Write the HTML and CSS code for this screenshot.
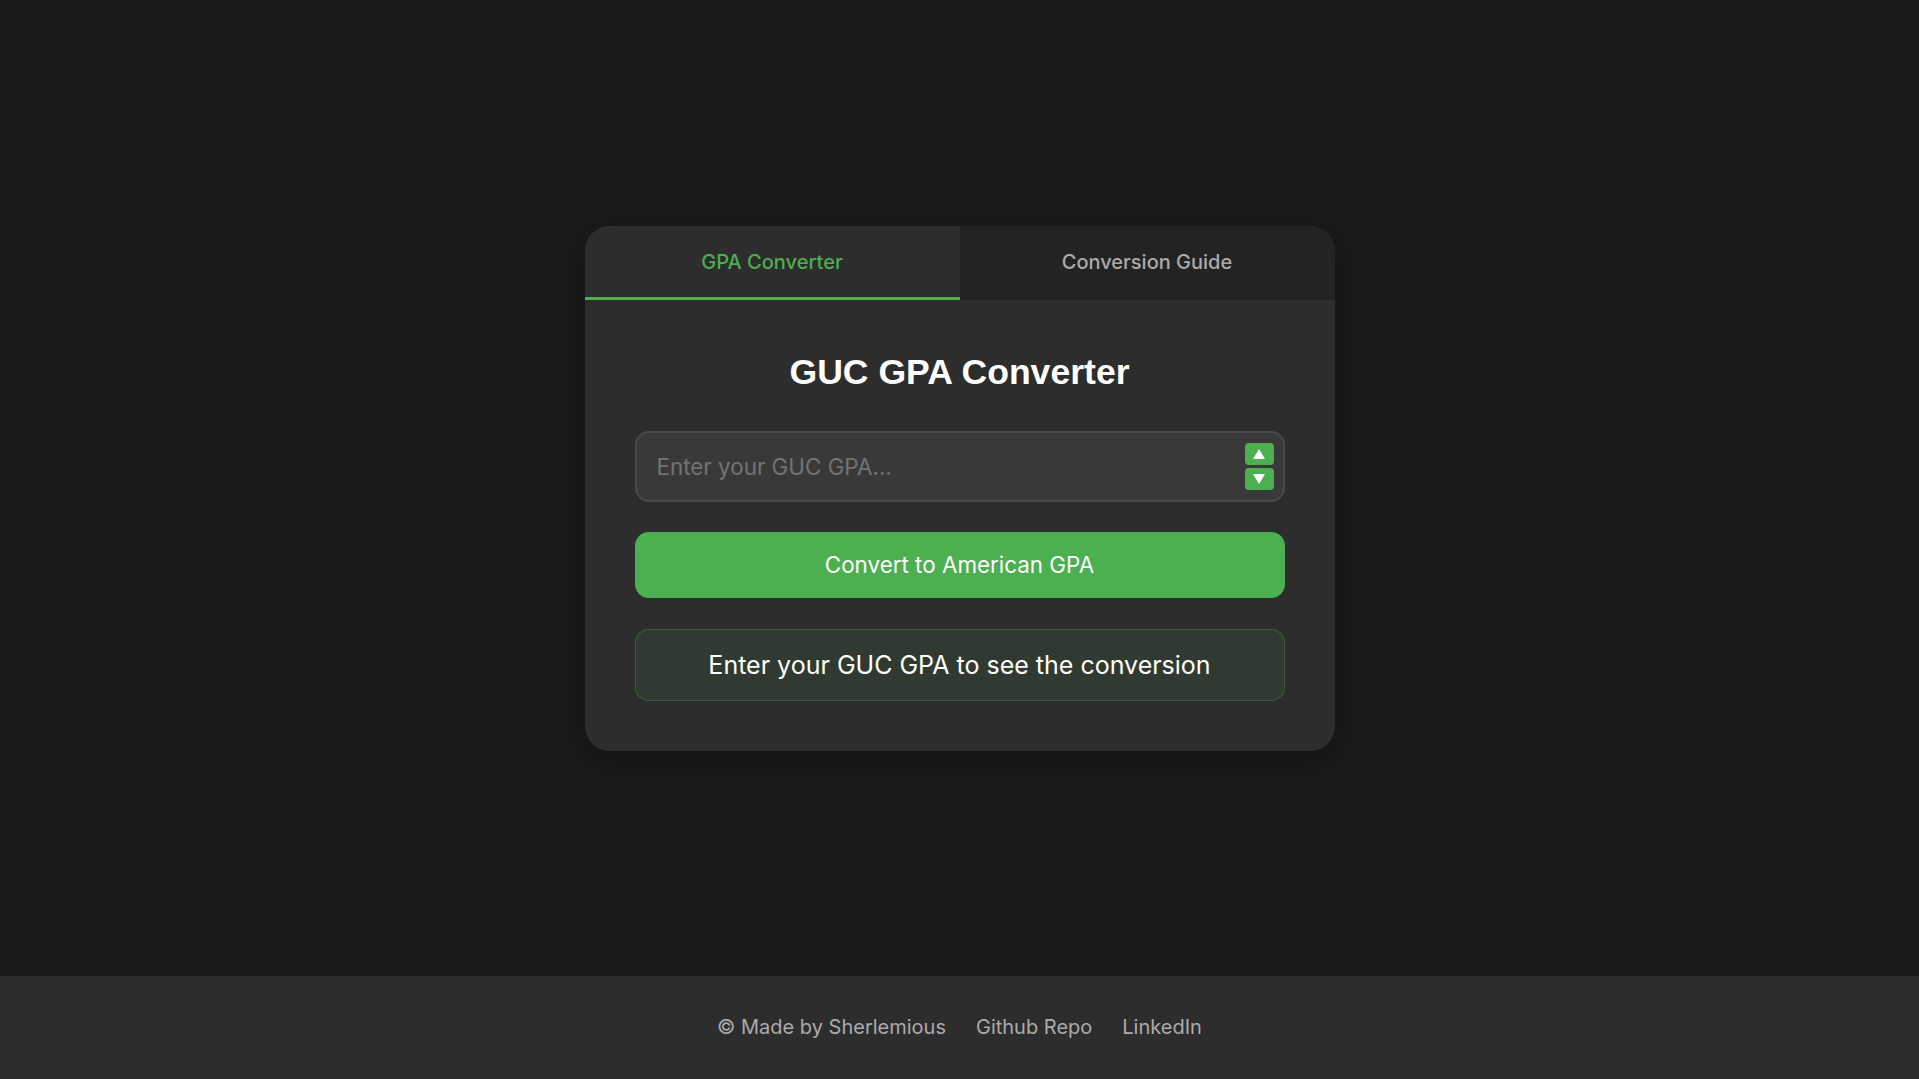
FILE: index.html
```html
<!DOCTYPE html>
<html lang="en">
<head>
  <meta charset="UTF-8" />
  <meta name="viewport" content="width=device-width, initial-scale=1.0"/>
  <title>GUC GPA Converter</title>
  <link rel="stylesheet" href="styles.css">
</head>
<body>

  <main class="page">
    <div class="card">
      <div class="tabs">
        <button class="tab active" data-tab="converter">GPA Converter</button>
        <button class="tab" data-tab="guide">Conversion Guide</button>
      </div>

      <div class="card-body" id="converter">
        <h1>GUC GPA Converter</h1>

        <div class="gpa-field">
          <input type="number" id="gpa" min="0.7" max="5" step="0.01" placeholder="Enter your GUC GPA...">
          <div class="spinner">
            <button class="spin" id="spinUp" aria-label="Increase">
              <svg width="12" height="10" viewBox="0 0 12 10"><polygon points="6,0 12,10 0,10" fill="#fff"/></svg>
            </button>
            <button class="spin" id="spinDown" aria-label="Decrease">
              <svg width="12" height="10" viewBox="0 0 12 10"><polygon points="0,0 12,0 6,10" fill="#fff"/></svg>
            </button>
          </div>
        </div>

        <button class="convert" id="convertBtn">Convert to American GPA</button>

        <div class="result" id="result">Enter your GUC GPA to see the conversion</div>
      </div>
    </div>
  </main>

  <footer class="footer">
    <span>© Made by Sherlemious</span>
    <a href="#">Github Repo</a>
    <a href="#">LinkedIn</a>
  </footer>

  <script>
    const input = document.getElementById("gpa");
    const result = document.getElementById("result");

    document.getElementById("spinUp").addEventListener("click", () => input.stepUp());
    document.getElementById("spinDown").addEventListener("click", () => input.stepDown());

    document.getElementById("convertBtn").addEventListener("click", () => {
      const guc = parseFloat(input.value);
      if (isNaN(guc) || guc < 0.7 || guc > 5) {
        result.textContent = "Please enter a valid GUC GPA (0.7 - 5.0)";
        return;
      }
      const us = Math.max(0, Math.min(4, 4 - ((guc - 0.7) / 4.3) * 4));
      result.textContent = "American GPA: " + us.toFixed(2);
    });
  </script>

</body>
</html>
```

FILE: styles.css
```css
:root {
  --bg: #1b1b1b;
  --card: #2d2d2d;
  --tab-off: #232323;
  --green: #4caf50;
  --muted: #ababab;
  --field: #393939;
  --field-border: #4a4a4a;
}

* {
  box-sizing: border-box;
}

body {
  margin: 0;
  min-height: 100vh;
  display: flex;
  flex-direction: column;
  background-color: var(--bg);
  font-family: Inter, 'Noto Sans', sans-serif;
  color: #ffffff;
}

.page {
  flex: 1;
  display: flex;
  align-items: center;
  justify-content: center;
}

.card {
  width: 750px;
  background-color: var(--card);
  border-radius: 25px;
  overflow: hidden;
  box-shadow: 0 8px 32px rgba(0, 0, 0, 0.35);
}

.tabs {
  display: flex;
}

.tab {
  flex: 1;
  padding: 24px 0 23px;
  background-color: var(--tab-off);
  color: var(--muted);
  border: none;
  border-bottom: 3px solid transparent;
  font-family: inherit;
  font-size: 20px;
  font-weight: 500;
  cursor: pointer;
}

.tab.active {
  background-color: var(--card);
  color: var(--green);
  border-bottom-color: var(--green);
}

.card-body {
  padding: 52px 50px 50px;
}

h1 {
  margin: 0 0 38px;
  text-align: center;
  font-family: 'Liberation Sans', Arial, sans-serif;
  font-size: 35.6px;
  font-weight: bold;
}

.gpa-field {
  display: flex;
  align-items: center;
  background-color: var(--field);
  border: 2px solid var(--field-border);
  border-radius: 14px;
  padding-right: 9px;
}

.gpa-field input {
  flex: 1;
  min-width: 0;
  padding: 20px;
  background: transparent;
  border: none;
  outline: none;
  color: #ffffff;
  font-family: inherit;
  font-size: 22.4px;
  -moz-appearance: textfield;
}

.gpa-field input::placeholder {
  color: #737373;
}

.gpa-field input::-webkit-outer-spin-button,
.gpa-field input::-webkit-inner-spin-button {
  -webkit-appearance: none;
  margin: 0;
}

.spinner {
  display: flex;
  flex-direction: column;
  gap: 3px;
}

.spin {
  width: 29px;
  height: 22px;
  padding: 0;
  display: flex;
  align-items: center;
  justify-content: center;
  background-color: var(--green);
  border: none;
  border-radius: 4px;
  cursor: pointer;
}

.convert {
  display: block;
  width: 100%;
  height: 66px;
  margin-top: 30px;
  background-color: var(--green);
  color: #ffffff;
  border: none;
  border-radius: 14px;
  font-family: inherit;
  font-size: 22.4px;
  cursor: pointer;
}

.convert:hover {
  background-color: #45a049;
}

.result {
  margin-top: 31px;
  height: 72px;
  display: flex;
  align-items: center;
  justify-content: center;
  background-color: rgba(76, 175, 80, 0.1);
  border: 1px solid rgba(76, 175, 80, 0.3);
  border-radius: 14px;
  font-size: 25px;
}

.footer {
  display: flex;
  justify-content: center;
  gap: 30px;
  padding: 39px 0 40px;
  background-color: var(--card);
  color: var(--muted);
  font-size: 20px;
}

.footer a {
  color: var(--muted);
  text-decoration: none;
}
```
